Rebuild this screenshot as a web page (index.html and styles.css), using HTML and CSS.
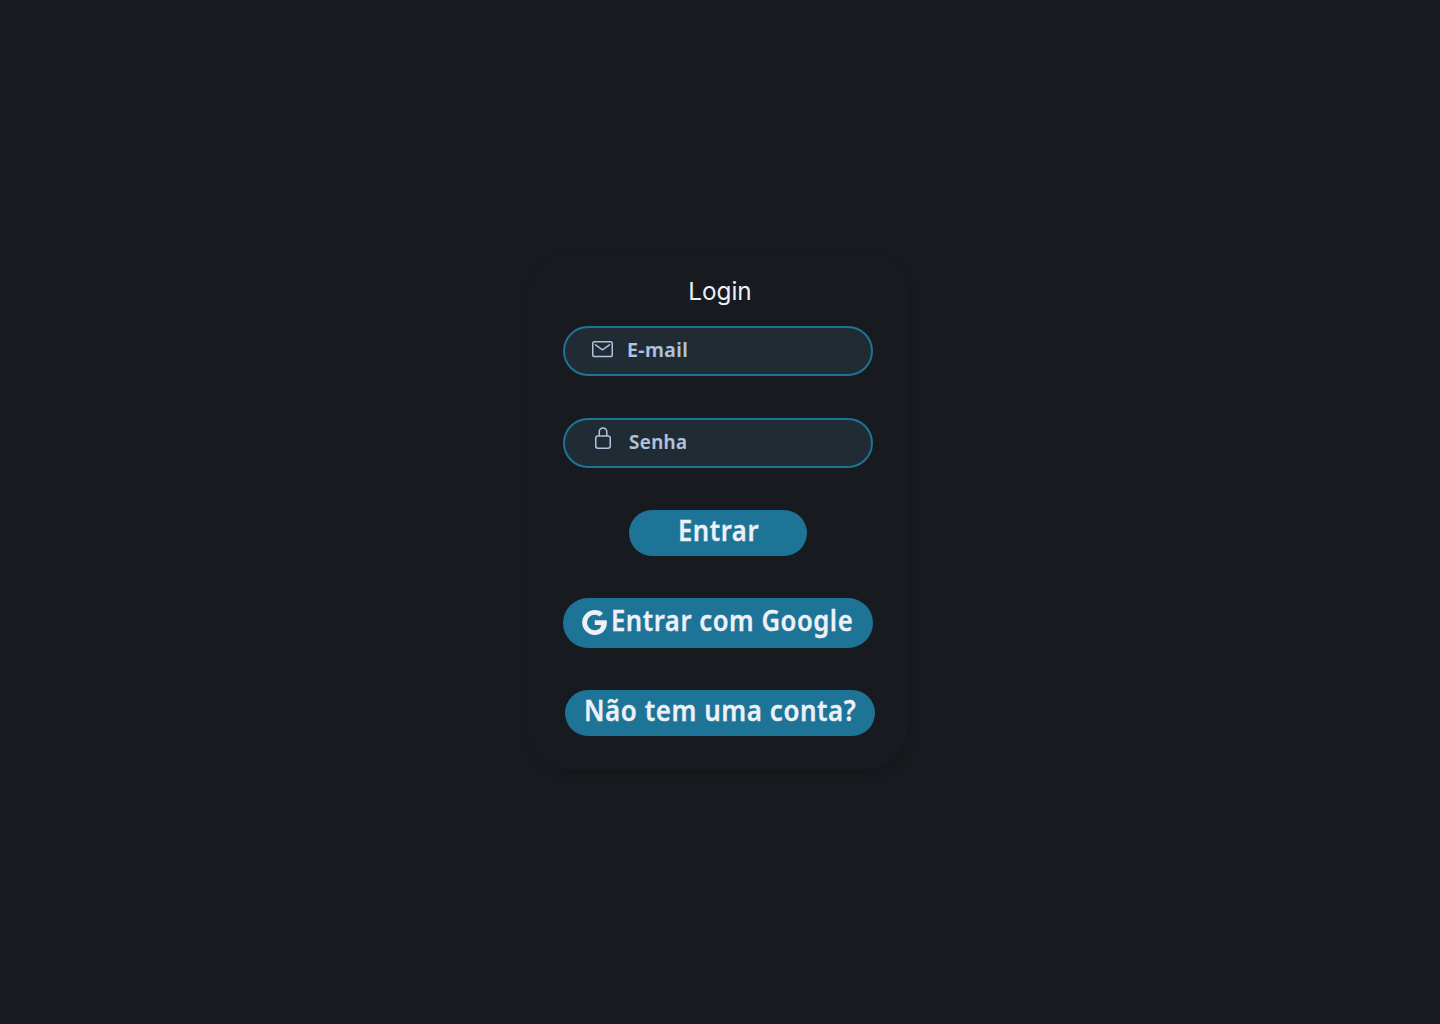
FILE: index.html
```html
<!DOCTYPE html>
<html lang="pt-BR">
<head>
<meta charset="utf-8">
<title>Login</title>
<link rel="stylesheet" href="styles.css">
</head>
<body>
<main class="card">
  <h1 class="title">Login</h1>
  <div class="field field-email">
    <svg class="icon" width="22" height="18" viewBox="0 0 22 18" fill="none" stroke="currentColor" stroke-width="1.5"><rect x="1.75" y="1.75" width="19.5" height="14.8" rx="1.8"/><path d="M4.5 4.8 11.5 9.8 18.5 4.8" stroke-linecap="round"/></svg>
    <span class="label">E-mail</span>
  </div>
  <div class="field field-password">
    <svg class="icon icon-lock" width="18" height="24" viewBox="0 0 18 24" fill="none" stroke="currentColor" stroke-width="1.5"><rect x="1.75" y="10.1" width="14.5" height="12.1" rx="2.2"/><path d="M5.2 10.1V5.7a3.8 3.8 0 0 1 7.6 0v4.4"/></svg>
    <span class="label label-senha">Senha</span>
  </div>
  <button class="button button-enter"><span class="caption">Entrar</span></button>
  <button class="button button-google">
    <svg class="google" width="25" height="25" viewBox="0 0 25 25"><path fill="currentColor" d="M12.75 10.2H24.6c.2.8.3 1.5.3 2.4C24.9 19.8 20 25 12.7 25A12.5 12.5 0 1 1 12.7 0c3.4 0 6.2 1.2 8.3 3.2l-3.5 3.4c-1.2-1.1-2.8-1.8-4.8-1.8a7.7 7.7 0 0 0 0 15.4c4.1 0 6.1-2.5 6.5-5.3h-6.45z"/></svg>
    <span class="caption">Entrar com Google</span>
  </button>
  <button class="button button-signup"><span class="caption">Não tem uma conta?</span></button>
</main>
</body>
</html>
```
FILE: styles.css
```css
* { box-sizing: border-box; }
body {
  margin: 0;
  min-height: 1024px;
  background: #171b1f;
  color: #edf0f7;
  display: flex;
  justify-content: center;
  align-items: flex-start;
  font-family: "Noto Sans", sans-serif;
}
.card {
  width: 380px;
  height: 520px;
  margin: 250px 4px 0 0;
  padding-top: 26px;
  border-radius: 44px;
  background: #171b1f;
  box-shadow: 2px 6px 8px rgba(0, 0, 0, 0.13);
  display: flex;
  flex-direction: column;
  align-items: center;
}
.title {
  margin: 0 0 20px 4px;
  font: 400 24.3px/30px Inter, sans-serif;
}
.field {
  flex: none;
  width: 310px;
  height: 50px;
  margin-bottom: 42px;
  border: 2px solid #1d7497;
  border-radius: 25px;
  background: #212b33;
  color: #b0c4de;
  display: flex;
  align-items: flex-start;
}
.field-email { padding: 12px 0 0 26px; }
.field-password { padding: 6px 0 0 29px; }
.label {
  margin: -5px 0 0 14px;
  font-size: 20.5px;
  font-weight: 600;
  line-height: 28px;
  letter-spacing: 0.4px;
  transform: scaleX(0.96);
  transform-origin: left;
  -webkit-text-stroke: 0.2px currentColor;
}
.label-senha {
  margin: 1px 0 0 17px;
  transform: scaleX(0.92);
}
.button {
  flex: none;
  width: 310px;
  height: 46px;
  padding: 0;
  border: 0;
  border-radius: 25px;
  background: #1d7497;
  color: #edf0f7;
  font: 600 28px/34px "Noto Sans", sans-serif;
  white-space: nowrap;
  display: flex;
  align-items: flex-start;
}
.caption {
  letter-spacing: 0.6px;
  transform: scaleX(0.915);
  transform-origin: left;
  -webkit-text-stroke: 0.3px currentColor;
}
.button-enter {
  width: 178px;
  margin-bottom: 42px;
  padding: 3px 0 0 49px;
}
.button-google {
  height: 50px;
  margin-bottom: 42px;
  padding: 5px 0 0 19px;
}
.google { flex: none; margin: 7px 4px 0 0; }
.button-signup {
  margin-left: 4px;
  padding: 3px 0 0 19px;
}
.button-signup .caption { transform: scaleX(0.926); }
```
